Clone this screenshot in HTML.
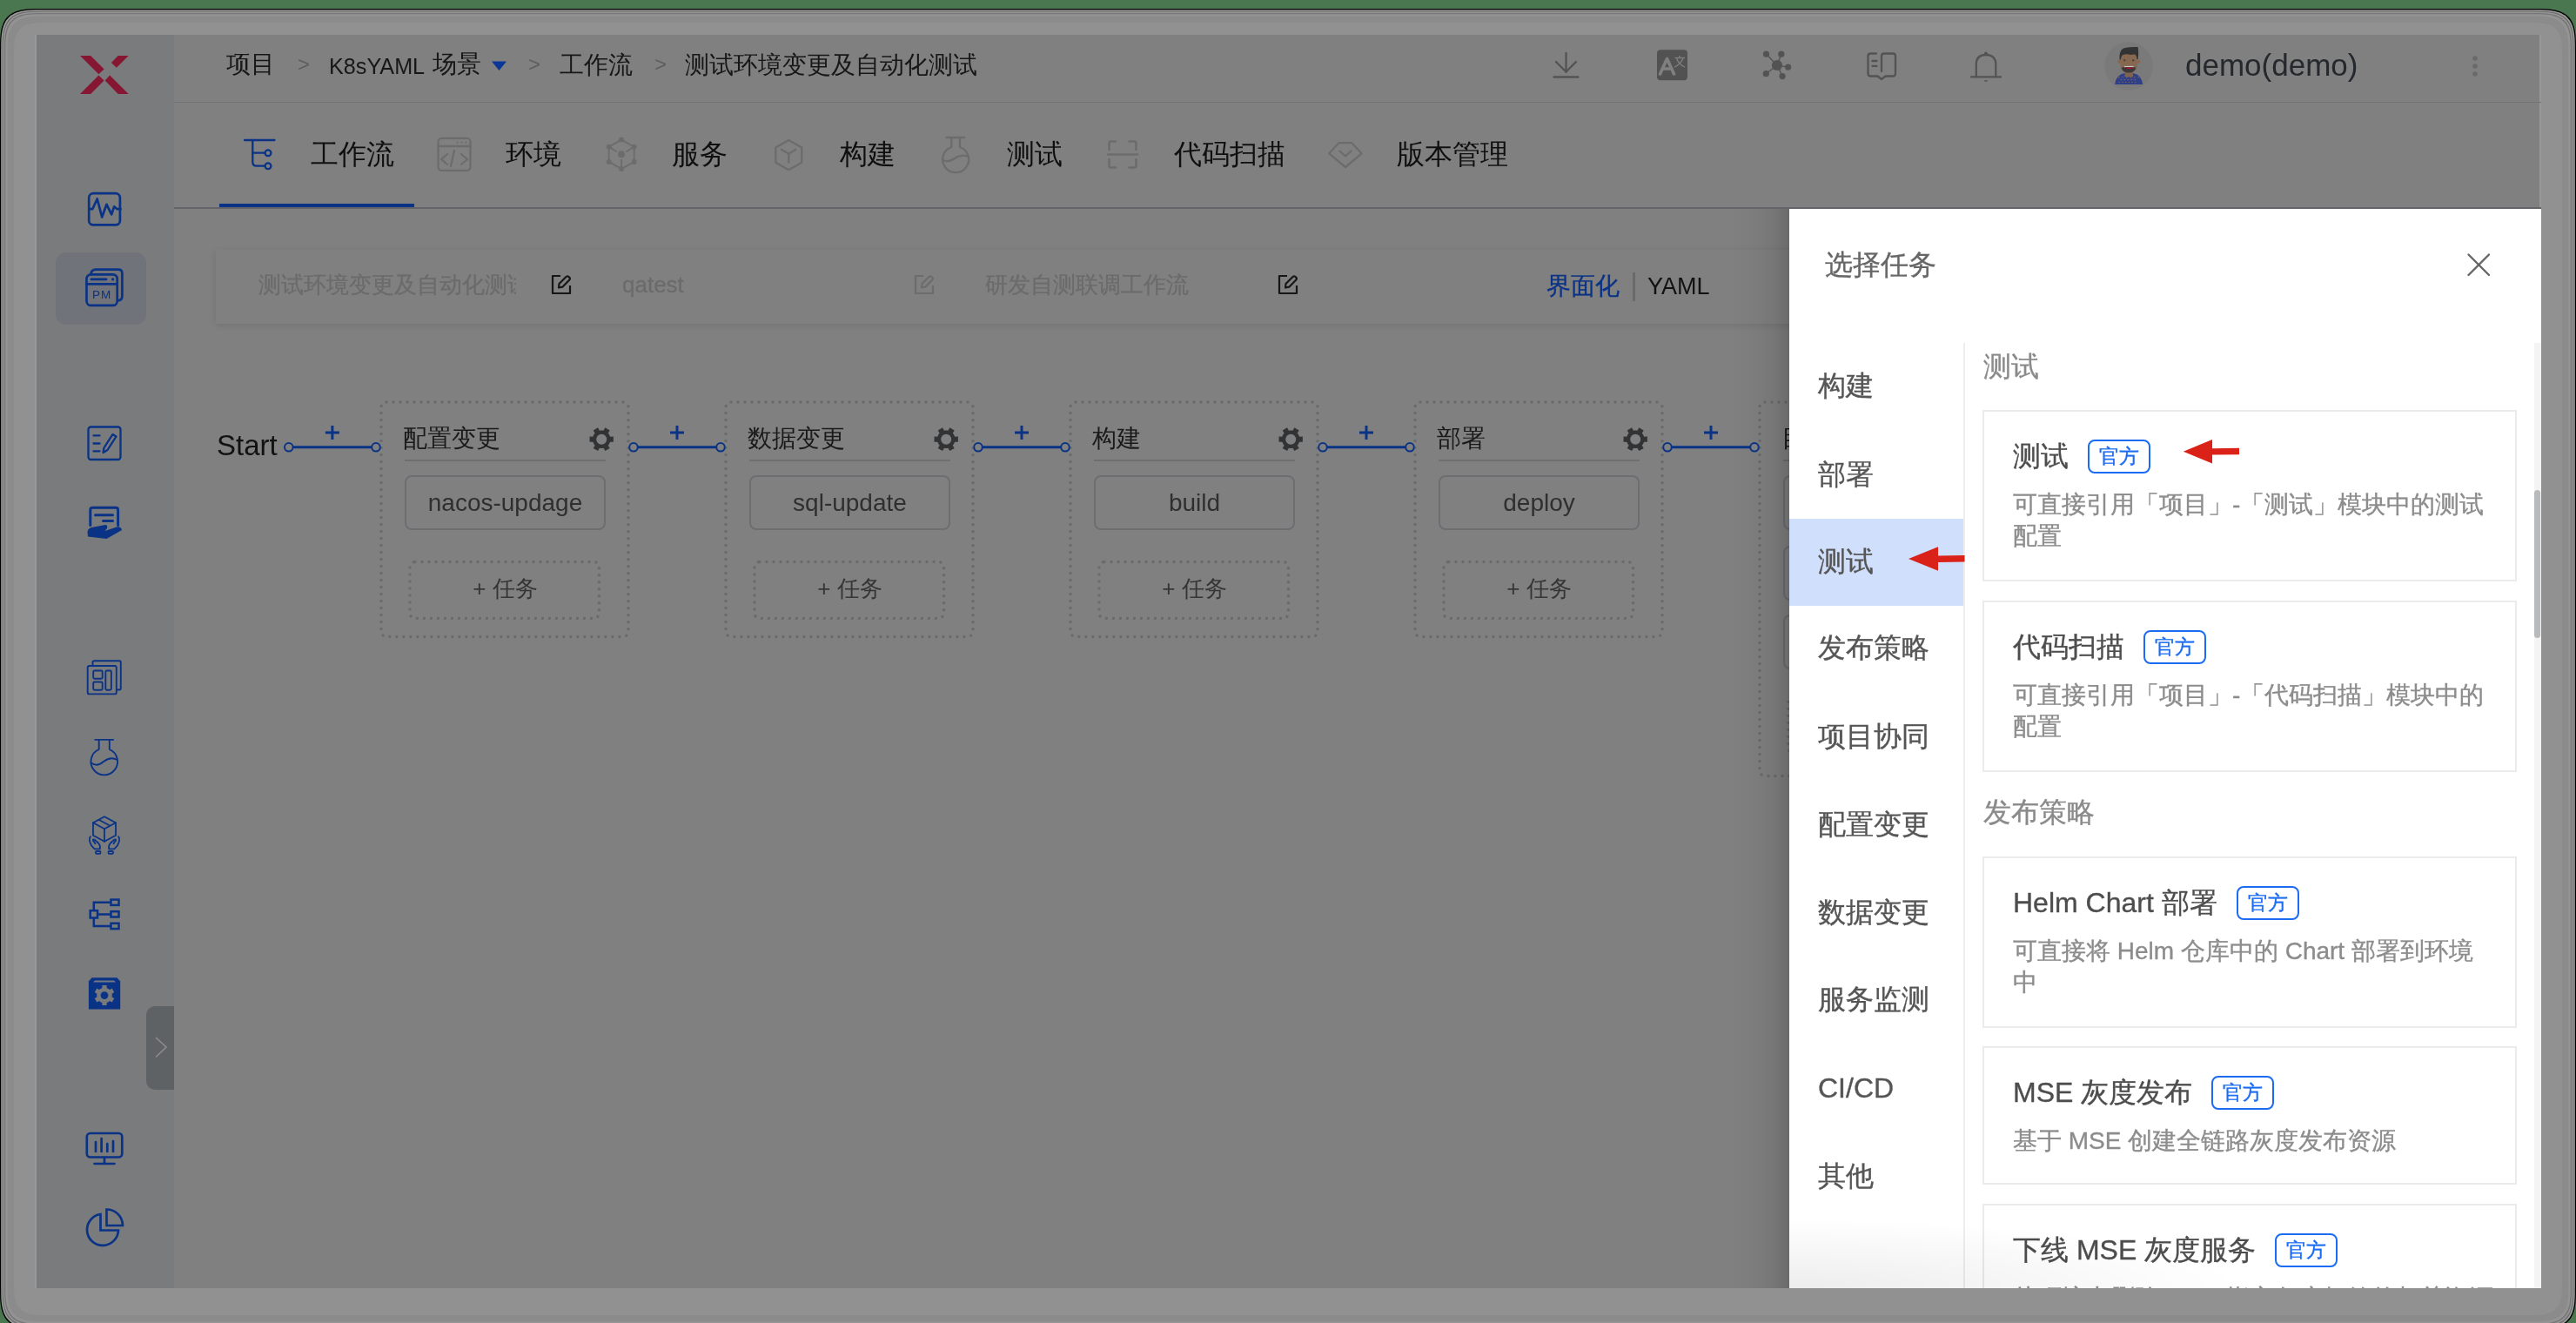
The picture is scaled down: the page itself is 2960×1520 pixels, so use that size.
<!DOCTYPE html><html><head><meta charset="utf-8"><style>
html,body{margin:0;padding:0;width:2960px;height:1520px;overflow:hidden;background:#4a7650;}
*{box-sizing:border-box;}
.t{position:absolute;white-space:nowrap;font-family:"Liberation Sans",sans-serif;will-change:transform;}
.abs{position:absolute;}
.sk{-webkit-text-stroke:0.35px currentColor;}
.sk2{-webkit-text-stroke:0.3px currentColor;}
svg{position:absolute;left:0;top:0;overflow:visible;}
</style></head><body>
<svg width="2960" height="1520"><path d="M0.00,60.00 L0.06,49.48 L0.24,44.38 L0.55,40.35 L0.98,36.90 L1.53,33.86 L2.21,31.12 L3.02,28.63 L3.95,26.35 L5.00,24.26 L6.20,22.35 L7.52,20.59 L8.98,18.98 L10.59,17.52 L12.35,16.20 L14.26,15.00 L16.35,13.95 L18.63,13.02 L21.12,12.21 L23.86,11.53 L26.90,10.98 L30.35,10.55 L34.38,10.24 L39.48,10.06 L50.00,10.00 L2910.00,10.00 L2920.52,10.06 L2925.62,10.24 L2929.65,10.55 L2933.10,10.98 L2936.14,11.53 L2938.88,12.21 L2941.37,13.02 L2943.65,13.95 L2945.74,15.00 L2947.65,16.20 L2949.41,17.52 L2951.02,18.98 L2952.48,20.59 L2953.80,22.35 L2955.00,24.26 L2956.05,26.35 L2956.98,28.63 L2957.79,31.12 L2958.47,33.86 L2959.02,36.90 L2959.45,40.35 L2959.76,44.38 L2959.94,49.48 L2960.00,60.00 L2960.00,1477.00 L2959.94,1487.52 L2959.76,1492.62 L2959.45,1496.65 L2959.02,1500.10 L2958.47,1503.14 L2957.79,1505.88 L2956.98,1508.37 L2956.05,1510.65 L2955.00,1512.74 L2953.80,1514.65 L2952.48,1516.41 L2951.02,1518.02 L2949.41,1519.48 L2947.65,1520.80 L2945.74,1522.00 L2943.65,1523.05 L2941.37,1523.98 L2938.88,1524.79 L2936.14,1525.47 L2933.10,1526.02 L2929.65,1526.45 L2925.62,1526.76 L2920.52,1526.94 L2910.00,1527.00 L50.00,1527.00 L39.48,1526.94 L34.38,1526.76 L30.35,1526.45 L26.90,1526.02 L23.86,1525.47 L21.12,1524.79 L18.63,1523.98 L16.35,1523.05 L14.26,1522.00 L12.35,1520.80 L10.59,1519.48 L8.98,1518.02 L7.52,1516.41 L6.20,1514.65 L5.00,1512.74 L3.95,1510.65 L3.02,1508.37 L2.21,1505.88 L1.53,1503.14 L0.98,1500.10 L0.55,1496.65 L0.24,1492.62 L0.06,1487.52 L0.00,1477.00 Z" fill="#000"/><path d="M1.20,60.48 L1.26,50.11 L1.44,45.09 L1.74,41.11 L2.17,37.72 L2.71,34.72 L3.38,32.02 L4.17,29.56 L5.09,27.32 L6.13,25.26 L7.31,23.37 L8.61,21.64 L10.05,20.05 L11.64,18.61 L13.37,17.31 L15.26,16.13 L17.32,15.09 L19.56,14.17 L22.02,13.38 L24.72,12.71 L27.72,12.17 L31.11,11.74 L35.09,11.44 L40.11,11.26 L50.48,11.20 L2909.52,11.20 L2919.89,11.26 L2924.91,11.44 L2928.89,11.74 L2932.28,12.17 L2935.28,12.71 L2937.98,13.38 L2940.44,14.17 L2942.68,15.09 L2944.74,16.13 L2946.63,17.31 L2948.36,18.61 L2949.95,20.05 L2951.39,21.64 L2952.69,23.37 L2953.87,25.26 L2954.91,27.32 L2955.83,29.56 L2956.62,32.02 L2957.29,34.72 L2957.83,37.72 L2958.26,41.11 L2958.56,45.09 L2958.74,50.11 L2958.80,60.48 L2958.80,1476.52 L2958.74,1486.89 L2958.56,1491.91 L2958.26,1495.89 L2957.83,1499.28 L2957.29,1502.28 L2956.62,1504.98 L2955.83,1507.44 L2954.91,1509.68 L2953.87,1511.74 L2952.69,1513.63 L2951.39,1515.36 L2949.95,1516.95 L2948.36,1518.39 L2946.63,1519.69 L2944.74,1520.87 L2942.68,1521.91 L2940.44,1522.83 L2937.98,1523.62 L2935.28,1524.29 L2932.28,1524.83 L2928.89,1525.26 L2924.91,1525.56 L2919.89,1525.74 L2909.52,1525.80 L50.48,1525.80 L40.11,1525.74 L35.09,1525.56 L31.11,1525.26 L27.72,1524.83 L24.72,1524.29 L22.02,1523.62 L19.56,1522.83 L17.32,1521.91 L15.26,1520.87 L13.37,1519.69 L11.64,1518.39 L10.05,1516.95 L8.61,1515.36 L7.31,1513.63 L6.13,1511.74 L5.09,1509.68 L4.17,1507.44 L3.38,1504.98 L2.71,1502.28 L2.17,1499.28 L1.74,1495.89 L1.44,1491.91 L1.26,1486.89 L1.20,1476.52 Z" fill="#9c9c9c"/><path d="M2.60,61.04 L2.66,50.84 L2.84,45.91 L3.13,42.00 L3.55,38.66 L4.09,35.72 L4.74,33.06 L5.52,30.65 L6.42,28.44 L7.45,26.42 L8.60,24.56 L9.89,22.86 L11.30,21.30 L12.86,19.89 L14.56,18.60 L16.42,17.45 L18.44,16.42 L20.65,15.52 L23.06,14.74 L25.72,14.09 L28.66,13.55 L32.00,13.13 L35.91,12.84 L40.84,12.66 L51.04,12.60 L2908.96,12.60 L2919.16,12.66 L2924.09,12.84 L2928.00,13.13 L2931.34,13.55 L2934.28,14.09 L2936.94,14.74 L2939.35,15.52 L2941.56,16.42 L2943.58,17.45 L2945.44,18.60 L2947.14,19.89 L2948.70,21.30 L2950.11,22.86 L2951.40,24.56 L2952.55,26.42 L2953.58,28.44 L2954.48,30.65 L2955.26,33.06 L2955.91,35.72 L2956.45,38.66 L2956.87,42.00 L2957.16,45.91 L2957.34,50.84 L2957.40,61.04 L2957.40,1475.96 L2957.34,1486.16 L2957.16,1491.09 L2956.87,1495.00 L2956.45,1498.34 L2955.91,1501.28 L2955.26,1503.94 L2954.48,1506.35 L2953.58,1508.56 L2952.55,1510.58 L2951.40,1512.44 L2950.11,1514.14 L2948.70,1515.70 L2947.14,1517.11 L2945.44,1518.40 L2943.58,1519.55 L2941.56,1520.58 L2939.35,1521.48 L2936.94,1522.26 L2934.28,1522.91 L2931.34,1523.45 L2928.00,1523.87 L2924.09,1524.16 L2919.16,1524.34 L2908.96,1524.40 L51.04,1524.40 L40.84,1524.34 L35.91,1524.16 L32.00,1523.87 L28.66,1523.45 L25.72,1522.91 L23.06,1522.26 L20.65,1521.48 L18.44,1520.58 L16.42,1519.55 L14.56,1518.40 L12.86,1517.11 L11.30,1515.70 L9.89,1514.14 L8.60,1512.44 L7.45,1510.58 L6.42,1508.56 L5.52,1506.35 L4.74,1503.94 L4.09,1501.28 L3.55,1498.34 L3.13,1495.00 L2.84,1491.09 L2.66,1486.16 L2.60,1475.96 Z" fill="#6b6b6b"/><path d="M3.60,61.44 L3.66,51.37 L3.83,46.50 L4.13,42.64 L4.54,39.34 L5.07,36.43 L5.72,33.81 L6.48,31.43 L7.37,29.25 L8.39,27.25 L9.53,25.41 L10.80,23.73 L12.20,22.20 L13.73,20.80 L15.41,19.53 L17.25,18.39 L19.25,17.37 L21.43,16.48 L23.81,15.72 L26.43,15.07 L29.34,14.54 L32.64,14.13 L36.50,13.83 L41.37,13.66 L51.44,13.60 L2908.56,13.60 L2918.63,13.66 L2923.50,13.83 L2927.36,14.13 L2930.66,14.54 L2933.57,15.07 L2936.19,15.72 L2938.57,16.48 L2940.75,17.37 L2942.75,18.39 L2944.59,19.53 L2946.27,20.80 L2947.80,22.20 L2949.20,23.73 L2950.47,25.41 L2951.61,27.25 L2952.63,29.25 L2953.52,31.43 L2954.28,33.81 L2954.93,36.43 L2955.46,39.34 L2955.87,42.64 L2956.17,46.50 L2956.34,51.37 L2956.40,61.44 L2956.40,1475.56 L2956.34,1485.63 L2956.17,1490.50 L2955.87,1494.36 L2955.46,1497.66 L2954.93,1500.57 L2954.28,1503.19 L2953.52,1505.57 L2952.63,1507.75 L2951.61,1509.75 L2950.47,1511.59 L2949.20,1513.27 L2947.80,1514.80 L2946.27,1516.20 L2944.59,1517.47 L2942.75,1518.61 L2940.75,1519.63 L2938.57,1520.52 L2936.19,1521.28 L2933.57,1521.93 L2930.66,1522.46 L2927.36,1522.87 L2923.50,1523.17 L2918.63,1523.34 L2908.56,1523.40 L51.44,1523.40 L41.37,1523.34 L36.50,1523.17 L32.64,1522.87 L29.34,1522.46 L26.43,1521.93 L23.81,1521.28 L21.43,1520.52 L19.25,1519.63 L17.25,1518.61 L15.41,1517.47 L13.73,1516.20 L12.20,1514.80 L10.80,1513.27 L9.53,1511.59 L8.39,1509.75 L7.37,1507.75 L6.48,1505.57 L5.72,1503.19 L5.07,1500.57 L4.54,1497.66 L4.13,1494.36 L3.83,1490.50 L3.66,1485.63 L3.60,1475.56 Z" fill="#959595"/><path d="M5.00,62.00 L5.06,52.11 L5.23,47.32 L5.52,43.53 L5.92,40.29 L6.44,37.43 L7.08,34.85 L7.83,32.51 L8.71,30.37 L9.70,28.41 L10.82,26.61 L12.07,24.95 L13.44,23.44 L14.95,22.07 L16.61,20.82 L18.41,19.70 L20.37,18.71 L22.51,17.83 L24.85,17.08 L27.43,16.44 L30.29,15.92 L33.53,15.52 L37.32,15.23 L42.11,15.06 L52.00,15.00 L2908.00,15.00 L2917.89,15.06 L2922.68,15.23 L2926.47,15.52 L2929.71,15.92 L2932.57,16.44 L2935.15,17.08 L2937.49,17.83 L2939.63,18.71 L2941.59,19.70 L2943.39,20.82 L2945.05,22.07 L2946.56,23.44 L2947.93,24.95 L2949.18,26.61 L2950.30,28.41 L2951.29,30.37 L2952.17,32.51 L2952.92,34.85 L2953.56,37.43 L2954.08,40.29 L2954.48,43.53 L2954.77,47.32 L2954.94,52.11 L2955.00,62.00 L2955.00,1475.00 L2954.94,1484.89 L2954.77,1489.68 L2954.48,1493.47 L2954.08,1496.71 L2953.56,1499.57 L2952.92,1502.15 L2952.17,1504.49 L2951.29,1506.63 L2950.30,1508.59 L2949.18,1510.39 L2947.93,1512.05 L2946.56,1513.56 L2945.05,1514.93 L2943.39,1516.18 L2941.59,1517.30 L2939.63,1518.29 L2937.49,1519.17 L2935.15,1519.92 L2932.57,1520.56 L2929.71,1521.08 L2926.47,1521.48 L2922.68,1521.77 L2917.89,1521.94 L2908.00,1522.00 L52.00,1522.00 L42.11,1521.94 L37.32,1521.77 L33.53,1521.48 L30.29,1521.08 L27.43,1520.56 L24.85,1519.92 L22.51,1519.17 L20.37,1518.29 L18.41,1517.30 L16.61,1516.18 L14.95,1514.93 L13.44,1513.56 L12.07,1512.05 L10.82,1510.39 L9.70,1508.59 L8.71,1506.63 L7.83,1504.49 L7.08,1502.15 L6.44,1499.57 L5.92,1496.71 L5.52,1493.47 L5.23,1489.68 L5.06,1484.89 L5.00,1475.00 Z" fill="#767676"/><path d="M6.20,62.48 L6.26,52.74 L6.43,48.02 L6.71,44.29 L7.11,41.10 L7.62,38.28 L8.25,35.75 L8.99,33.44 L9.85,31.34 L10.83,29.40 L11.93,27.63 L13.16,26.00 L14.51,24.51 L16.00,23.16 L17.63,21.93 L19.40,20.83 L21.34,19.85 L23.44,18.99 L25.75,18.25 L28.28,17.62 L31.10,17.11 L34.29,16.71 L38.02,16.43 L42.74,16.26 L52.48,16.20 L2907.52,16.20 L2917.26,16.26 L2921.98,16.43 L2925.71,16.71 L2928.90,17.11 L2931.72,17.62 L2934.25,18.25 L2936.56,18.99 L2938.66,19.85 L2940.60,20.83 L2942.37,21.93 L2944.00,23.16 L2945.49,24.51 L2946.84,26.00 L2948.07,27.63 L2949.17,29.40 L2950.15,31.34 L2951.01,33.44 L2951.75,35.75 L2952.38,38.28 L2952.89,41.10 L2953.29,44.29 L2953.57,48.02 L2953.74,52.74 L2953.80,62.48 L2953.80,1474.52 L2953.74,1484.26 L2953.57,1488.98 L2953.29,1492.71 L2952.89,1495.90 L2952.38,1498.72 L2951.75,1501.25 L2951.01,1503.56 L2950.15,1505.66 L2949.17,1507.60 L2948.07,1509.37 L2946.84,1511.00 L2945.49,1512.49 L2944.00,1513.84 L2942.37,1515.07 L2940.60,1516.17 L2938.66,1517.15 L2936.56,1518.01 L2934.25,1518.75 L2931.72,1519.38 L2928.90,1519.89 L2925.71,1520.29 L2921.98,1520.57 L2917.26,1520.74 L2907.52,1520.80 L52.48,1520.80 L42.74,1520.74 L38.02,1520.57 L34.29,1520.29 L31.10,1519.89 L28.28,1519.38 L25.75,1518.75 L23.44,1518.01 L21.34,1517.15 L19.40,1516.17 L17.63,1515.07 L16.00,1513.84 L14.51,1512.49 L13.16,1511.00 L11.93,1509.37 L10.83,1507.60 L9.85,1505.66 L8.99,1503.56 L8.25,1501.25 L7.62,1498.72 L7.11,1495.90 L6.71,1492.71 L6.43,1488.98 L6.26,1484.26 L6.20,1474.52 Z" fill="#949494"/><path d="M8.50,63.40 L8.55,53.95 L8.72,49.37 L9.00,45.75 L9.38,42.66 L9.88,39.93 L10.49,37.47 L11.21,35.23 L12.04,33.18 L12.99,31.31 L14.06,29.59 L15.25,28.01 L16.57,26.57 L18.01,25.25 L19.59,24.06 L21.31,22.99 L23.18,22.04 L25.23,21.21 L27.47,20.49 L29.93,19.88 L32.66,19.38 L35.75,19.00 L39.37,18.72 L43.95,18.55 L53.40,18.50 L2906.60,18.50 L2916.05,18.55 L2920.63,18.72 L2924.25,19.00 L2927.34,19.38 L2930.07,19.88 L2932.53,20.49 L2934.77,21.21 L2936.82,22.04 L2938.69,22.99 L2940.41,24.06 L2941.99,25.25 L2943.43,26.57 L2944.75,28.01 L2945.94,29.59 L2947.01,31.31 L2947.96,33.18 L2948.79,35.23 L2949.51,37.47 L2950.12,39.93 L2950.62,42.66 L2951.00,45.75 L2951.28,49.37 L2951.45,53.95 L2951.50,63.40 L2951.50,1473.60 L2951.45,1483.05 L2951.28,1487.63 L2951.00,1491.25 L2950.62,1494.34 L2950.12,1497.07 L2949.51,1499.53 L2948.79,1501.77 L2947.96,1503.82 L2947.01,1505.69 L2945.94,1507.41 L2944.75,1508.99 L2943.43,1510.43 L2941.99,1511.75 L2940.41,1512.94 L2938.69,1514.01 L2936.82,1514.96 L2934.77,1515.79 L2932.53,1516.51 L2930.07,1517.12 L2927.34,1517.62 L2924.25,1518.00 L2920.63,1518.28 L2916.05,1518.45 L2906.60,1518.50 L53.40,1518.50 L43.95,1518.45 L39.37,1518.28 L35.75,1518.00 L32.66,1517.62 L29.93,1517.12 L27.47,1516.51 L25.23,1515.79 L23.18,1514.96 L21.31,1514.01 L19.59,1512.94 L18.01,1511.75 L16.57,1510.43 L15.25,1508.99 L14.06,1507.41 L12.99,1505.69 L12.04,1503.82 L11.21,1501.77 L10.49,1499.53 L9.88,1497.07 L9.38,1494.34 L9.00,1491.25 L8.72,1487.63 L8.55,1483.05 L8.50,1473.60 Z" fill="#8b8b8b"/><path d="M16.00,66.40 L16.05,57.90 L16.20,53.78 L16.45,50.52 L16.79,47.74 L17.24,45.28 L17.79,43.07 L18.44,41.05 L19.19,39.21 L20.04,37.53 L21.01,35.98 L22.08,34.56 L23.26,33.26 L24.56,32.08 L25.98,31.01 L27.53,30.04 L29.21,29.19 L31.05,28.44 L33.07,27.79 L35.28,27.24 L37.74,26.79 L40.52,26.45 L43.78,26.20 L47.90,26.05 L56.40,26.00 L2903.60,26.00 L2912.10,26.05 L2916.22,26.20 L2919.48,26.45 L2922.26,26.79 L2924.72,27.24 L2926.93,27.79 L2928.95,28.44 L2930.79,29.19 L2932.47,30.04 L2934.02,31.01 L2935.44,32.08 L2936.74,33.26 L2937.92,34.56 L2938.99,35.98 L2939.96,37.53 L2940.81,39.21 L2941.56,41.05 L2942.21,43.07 L2942.76,45.28 L2943.21,47.74 L2943.55,50.52 L2943.80,53.78 L2943.95,57.90 L2944.00,66.40 L2944.00,1470.60 L2943.95,1479.10 L2943.80,1483.22 L2943.55,1486.48 L2943.21,1489.26 L2942.76,1491.72 L2942.21,1493.93 L2941.56,1495.95 L2940.81,1497.79 L2939.96,1499.47 L2938.99,1501.02 L2937.92,1502.44 L2936.74,1503.74 L2935.44,1504.92 L2934.02,1505.99 L2932.47,1506.96 L2930.79,1507.81 L2928.95,1508.56 L2926.93,1509.21 L2924.72,1509.76 L2922.26,1510.21 L2919.48,1510.55 L2916.22,1510.80 L2912.10,1510.95 L2903.60,1511.00 L56.40,1511.00 L47.90,1510.95 L43.78,1510.80 L40.52,1510.55 L37.74,1510.21 L35.28,1509.76 L33.07,1509.21 L31.05,1508.56 L29.21,1507.81 L27.53,1506.96 L25.98,1505.99 L24.56,1504.92 L23.26,1503.74 L22.08,1502.44 L21.01,1501.02 L20.04,1499.47 L19.19,1497.79 L18.44,1495.95 L17.79,1493.93 L17.24,1491.72 L16.79,1489.26 L16.45,1486.48 L16.20,1483.22 L16.05,1479.10 L16.00,1470.60 Z" fill="#919191"/></svg>
<div class="abs" style="left:42px;top:40px;width:2878px;height:1440px;background:#808080;overflow:hidden;"></div>
<div class="abs" style="left:40px;top:40px;width:2px;height:1440px;background:#999;"></div>
<div class="abs" style="left:2918px;top:40px;width:2px;height:200px;background:#979797;"></div>
<div class="abs" style="left:42px;top:40px;width:158px;height:1440px;background:#7a7b7d;"></div>
<div class="abs" style="left:200px;top:117px;width:2720px;height:1px;background:#727376;"></div>
<div class="abs" style="left:200px;top:238px;width:2720px;height:2px;background:#636467;"></div>
<div class="abs" style="left:252px;top:234px;width:224px;height:4px;background:#0a3386;"></div>
<div class="abs" style="left:64px;top:290px;width:104px;height:83px;border-radius:12px;background:#70737a;"></div>
<div class="abs" style="left:168px;top:1156px;width:32px;height:96px;border-radius:10px 0 0 10px;background:#5f6264;"></div>
<div class="t " style="left:260px;top:60px;font-size:28px;line-height:28px;color:#171717;">项目</div>
<div class="t " style="left:342px;top:62px;font-size:24px;line-height:24px;color:#5e5e5e;">&gt;</div>
<div class="t " style="left:378px;top:64px;font-size:25.2px;line-height:25.2px;color:#171717;">K8sYAML</div>
<div class="t " style="left:497px;top:60px;font-size:28px;line-height:28px;color:#171717;">场景</div>
<div class="t " style="left:607px;top:62px;font-size:24px;line-height:24px;color:#5e5e5e;">&gt;</div>
<div class="t " style="left:643px;top:60.5px;font-size:28px;line-height:28px;color:#171717;">工作流</div>
<div class="t " style="left:752px;top:62px;font-size:24px;line-height:24px;color:#5e5e5e;">&gt;</div>
<div class="t " style="left:787px;top:60.5px;font-size:28px;line-height:28px;color:#171717;">测试环境变更及自动化测试</div>
<div class="t " style="left:2511px;top:57px;font-size:35px;line-height:35px;color:#25282c;">demo(demo)</div>
<div class="t " style="left:357px;top:161px;font-size:32px;line-height:32px;color:#0f0f0f;">工作流</div>
<div class="t " style="left:581px;top:161px;font-size:32px;line-height:32px;color:#0f0f0f;">环境</div>
<div class="t " style="left:772px;top:161px;font-size:32px;line-height:32px;color:#0f0f0f;">服务</div>
<div class="t " style="left:965px;top:161px;font-size:32px;line-height:32px;color:#0f0f0f;">构建</div>
<div class="t " style="left:1157px;top:161px;font-size:32px;line-height:32px;color:#0f0f0f;">测试</div>
<div class="t " style="left:1349px;top:161px;font-size:32px;line-height:32px;color:#0f0f0f;">代码扫描</div>
<div class="t " style="left:1605px;top:161px;font-size:32px;line-height:32px;color:#0f0f0f;">版本管理</div>
<div class="abs" style="left:248px;top:287px;width:1900px;height:85px;background:#808080;box-shadow:0 2px 8px rgba(0,0,0,0.10);"></div>
<div class="t sk2" style="left:297px;top:314px;width:296px;overflow:hidden;font-size:26px;line-height:26px;color:#6b6b6b">测试环境变更及自动化测试</div>
<div class="t sk2" style="left:715px;top:314px;font-size:26px;line-height:26px;color:#6b6b6b;">qatest</div>
<div class="t sk2" style="left:1132px;top:314px;font-size:26px;line-height:26px;color:#6b6b6b;">研发自测联调工作流</div>
<div class="t sk2" style="left:1777px;top:315px;font-size:28px;line-height:28px;color:#0a3386;">界面化</div>
<div class="abs" style="left:1876px;top:313px;width:3px;height:33px;background:#696a6c;"></div>
<div class="t " style="left:1893px;top:316px;font-size:27px;line-height:27px;color:#121212;">YAML</div>
<div class="t " style="left:249px;top:495px;font-size:33px;line-height:33px;color:#121212;">Start</div>
<div class="t " style="left:463.0px;top:489.5px;font-size:28px;line-height:28px;color:#1a1a1a;">配置变更</div>
<div class="abs" style="left:464.5px;top:528px;width:231px;height:2px;background:#6f6f6f;"></div>
<div class="abs" style="left:464.5px;top:546px;width:231px;height:63px;border:2px solid #6c6e72;border-radius:8px;"></div>
<div class="t" style="left:464.5px;top:561px;width:231px;text-align:center;font-size:28px;line-height:34px;color:#2f2f2f">nacos-updage</div>
<div class="t" style="left:469.5px;top:662px;width:221px;text-align:center;font-size:26px;line-height:28px;color:#353535">+ 任务</div>
<div class="t " style="left:859.0px;top:489.5px;font-size:28px;line-height:28px;color:#1a1a1a;">数据变更</div>
<div class="abs" style="left:860.5px;top:528px;width:231px;height:2px;background:#6f6f6f;"></div>
<div class="abs" style="left:860.5px;top:546px;width:231px;height:63px;border:2px solid #6c6e72;border-radius:8px;"></div>
<div class="t" style="left:860.5px;top:561px;width:231px;text-align:center;font-size:28px;line-height:34px;color:#2f2f2f">sql-update</div>
<div class="t" style="left:865.5px;top:662px;width:221px;text-align:center;font-size:26px;line-height:28px;color:#353535">+ 任务</div>
<div class="t " style="left:1255.0px;top:489.5px;font-size:28px;line-height:28px;color:#1a1a1a;">构建</div>
<div class="abs" style="left:1256.5px;top:528px;width:231px;height:2px;background:#6f6f6f;"></div>
<div class="abs" style="left:1256.5px;top:546px;width:231px;height:63px;border:2px solid #6c6e72;border-radius:8px;"></div>
<div class="t" style="left:1256.5px;top:561px;width:231px;text-align:center;font-size:28px;line-height:34px;color:#2f2f2f">build</div>
<div class="t" style="left:1261.5px;top:662px;width:221px;text-align:center;font-size:26px;line-height:28px;color:#353535">+ 任务</div>
<div class="t " style="left:1651.0px;top:489.5px;font-size:28px;line-height:28px;color:#1a1a1a;">部署</div>
<div class="abs" style="left:1652.5px;top:528px;width:231px;height:2px;background:#6f6f6f;"></div>
<div class="abs" style="left:1652.5px;top:546px;width:231px;height:63px;border:2px solid #6c6e72;border-radius:8px;"></div>
<div class="t" style="left:1652.5px;top:561px;width:231px;text-align:center;font-size:28px;line-height:34px;color:#2f2f2f">deploy</div>
<div class="t" style="left:1657.5px;top:662px;width:221px;text-align:center;font-size:26px;line-height:28px;color:#353535">+ 任务</div>
<div class="t " style="left:2047.0px;top:489.5px;font-size:28px;line-height:28px;color:#1a1a1a;">目录</div>
<div class="abs" style="left:2048.5px;top:528px;width:231px;height:2px;background:#6f6f6f;"></div>
<div class="abs" style="left:2048.5px;top:546px;width:231px;height:63px;border:2px solid #6c6e72;border-radius:8px;"></div>
<div class="abs" style="left:2048.5px;top:627px;width:231px;height:63px;border:2px solid #6c6e72;border-radius:8px;"></div>
<div class="abs" style="left:2048.5px;top:706px;width:231px;height:63px;border:2px solid #6c6e72;border-radius:8px;"></div>
<svg width="2960" height="1520"><g fill="none" stroke="#6a6b6d" stroke-width="3.6" stroke-dasharray="0 8" stroke-linecap="round"><rect x="438.0" y="462" width="284" height="269.5" rx="6"/><rect x="471.0" y="645.5" width="217.5" height="65" rx="6"/><rect x="834.0" y="462" width="284" height="269.5" rx="6"/><rect x="867.0" y="645.5" width="217.5" height="65" rx="6"/><rect x="1230.0" y="462" width="284" height="269.5" rx="6"/><rect x="1263.0" y="645.5" width="217.5" height="65" rx="6"/><rect x="1626.0" y="462" width="284" height="269.5" rx="6"/><rect x="1659.0" y="645.5" width="217.5" height="65" rx="6"/><rect x="2022.0" y="462" width="284" height="429.5" rx="6"/><rect x="2055.0" y="800" width="217.5" height="65" rx="6"/></g></svg>
<div class="abs" style="left:1990px;top:240px;width:66px;height:1240px;background:linear-gradient(to right,rgba(0,0,0,0) 0%,rgba(0,0,0,0.03) 45%,rgba(0,0,0,0.08) 75%,rgba(0,0,0,0.17) 100%);"></div>
<div class="abs" style="left:2056px;top:240px;width:864px;height:1240px;background:#fff;"></div>
<div class="t sk" style="left:2097px;top:288px;font-size:32px;line-height:32px;color:#666666;">选择任务</div>
<div class="abs" style="left:2056px;top:596px;width:200px;height:100px;background:#d0dffc;"></div>
<div class="abs" style="left:2256px;top:394px;width:2px;height:1086px;background:#eeeeee;"></div>
<div class="t sk" style="left:2089px;top:427px;font-size:32px;line-height:32px;color:#555555;">构建</div>
<div class="t sk" style="left:2089px;top:528.5px;font-size:32px;line-height:32px;color:#555555;">部署</div>
<div class="t sk" style="left:2089px;top:628.5px;font-size:32px;line-height:32px;color:#555555;">测试</div>
<div class="t sk" style="left:2089px;top:728px;font-size:32px;line-height:32px;color:#555555;">发布策略</div>
<div class="t sk" style="left:2089px;top:829.5px;font-size:32px;line-height:32px;color:#555555;">项目协同</div>
<div class="t sk" style="left:2089px;top:931px;font-size:32px;line-height:32px;color:#555555;">配置变更</div>
<div class="t sk" style="left:2089px;top:1032px;font-size:32px;line-height:32px;color:#555555;">数据变更</div>
<div class="t sk" style="left:2089px;top:1132px;font-size:32px;line-height:32px;color:#555555;">服务监测</div>
<div class="t sk" style="left:2089px;top:1233.5px;font-size:32px;line-height:32px;color:#555555;">CI/CD</div>
<div class="t sk" style="left:2089px;top:1334.5px;font-size:32px;line-height:32px;color:#555555;">其他</div>
<div class="abs" style="left:2912px;top:394px;width:8px;height:1086px;background:#f4f4f4;"></div>
<div class="abs" style="left:2912px;top:563px;width:7px;height:170px;border-radius:4px;background:#b9babb;"></div>
<div class="t sk" style="left:2279px;top:405px;font-size:32px;line-height:32px;color:#8a8a8a;">测试</div>
<div class="t sk" style="left:2279px;top:917px;font-size:32px;line-height:32px;color:#8a8a8a;">发布策略</div>
<div class="abs" style="left:2056px;top:240px;width:864px;height:1240px;overflow:hidden;">
<div class="abs" style="left:222px;top:231px;width:614px;height:197px;border:2px solid #e9ebed;"></div>
<div class="t sk" style="left:257px;top:264px;font-size:32px;line-height:32px;color:#4d4d4d;display:flex;align-items:center;">测试<span style="display:inline-block;margin-left:22px;width:72px;height:39px;border:2px solid #1b6cf2;border-radius:8px;color:#1b6cf2;font-size:23px;line-height:35px;text-align:center;font-weight:500;position:relative;top:1px;">官方</span></div>
<div class="t sk" style="left:257px;top:322px;font-size:28px;line-height:36px;color:#8c8c8c">可直接引用「项目」-「测试」模块中的测试<br>配置</div>
<div class="abs" style="left:222px;top:449.5px;width:614px;height:197px;border:2px solid #e9ebed;"></div>
<div class="t sk" style="left:257px;top:482.5px;font-size:32px;line-height:32px;color:#4d4d4d;display:flex;align-items:center;">代码扫描<span style="display:inline-block;margin-left:22px;width:72px;height:39px;border:2px solid #1b6cf2;border-radius:8px;color:#1b6cf2;font-size:23px;line-height:35px;text-align:center;font-weight:500;position:relative;top:1px;">官方</span></div>
<div class="t sk" style="left:257px;top:540.5px;font-size:28px;line-height:36px;color:#8c8c8c">可直接引用「项目」-「代码扫描」模块中的<br>配置</div>
<div class="abs" style="left:222px;top:744px;width:614px;height:197px;border:2px solid #e9ebed;"></div>
<div class="t sk" style="left:257px;top:777px;font-size:32px;line-height:32px;color:#4d4d4d;display:flex;align-items:center;">Helm Chart 部署<span style="display:inline-block;margin-left:22px;width:72px;height:39px;border:2px solid #1b6cf2;border-radius:8px;color:#1b6cf2;font-size:23px;line-height:35px;text-align:center;font-weight:500;position:relative;top:1px;">官方</span></div>
<div class="t sk" style="left:257px;top:835px;font-size:28px;line-height:36px;color:#8c8c8c">可直接将 Helm 仓库中的 Chart 部署到环境<br>中</div>
<div class="abs" style="left:222px;top:962px;width:614px;height:159px;border:2px solid #e9ebed;"></div>
<div class="t sk" style="left:257px;top:995px;font-size:32px;line-height:32px;color:#4d4d4d;display:flex;align-items:center;">MSE 灰度发布<span style="display:inline-block;margin-left:22px;width:72px;height:39px;border:2px solid #1b6cf2;border-radius:8px;color:#1b6cf2;font-size:23px;line-height:35px;text-align:center;font-weight:500;position:relative;top:1px;">官方</span></div>
<div class="t sk" style="left:257px;top:1053px;font-size:28px;line-height:36px;color:#8c8c8c">基于 MSE 创建全链路灰度发布资源</div>
<div class="abs" style="left:222px;top:1143px;width:614px;height:159px;border:2px solid #e9ebed;"></div>
<div class="t sk" style="left:257px;top:1176px;font-size:32px;line-height:32px;color:#4d4d4d;display:flex;align-items:center;">下线 MSE 灰度服务<span style="display:inline-block;margin-left:22px;width:72px;height:39px;border:2px solid #1b6cf2;border-radius:8px;color:#1b6cf2;font-size:23px;line-height:35px;text-align:center;font-weight:500;position:relative;top:1px;">官方</span></div>
<div class="t sk" style="left:257px;top:1234px;font-size:28px;line-height:36px;color:#8c8c8c">从环境中删除 MSE 指定灰度标签的相关资源</div>
</div>
<div class="abs" style="left:2056px;top:1400px;width:864px;height:80px;background:radial-gradient(ellipse 520px 80px at 0 100%, rgba(0,0,0,0.07), rgba(0,0,0,0));"></div>
<svg width="2960" height="1520" viewBox="0 0 2960 1520"><g fill="#861733"><polygon points="92,64 104.1,64 119.6,79.4 113.4,85.2"/><polygon points="135.7,64 147.7,64 133.9,77.8 127.9,71.9"/><polygon points="92,108 113.4,86.6 119.6,92.6 104.1,108"/><polygon points="120.7,92.6 126.1,86.4 147.7,108 135.7,108"/></g><g stroke="#0a3386" stroke-width="2.7" fill="none" stroke-linecap="round" stroke-linejoin="round"><rect x="102.2" y="222.2" width="35.7" height="36.2" rx="5"/><polyline points="102.5,240.2 106.3,240.2 111.7,228.5 117.2,249.5 122.5,234.8 128.2,246.3 131.1,237.4 134.7,240.2 138.5,240.2"/><rect x="99.5" y="315.3" width="35.2" height="35.6" rx="5"/><path d="M104.5,315 Q105,309.7 110,309.7 L136,309.7 Q140.4,309.7 140.4,314 L140.4,340 Q140.4,345.2 135.5,345.2"/><line x1="99.5" y1="326.3" x2="134.7" y2="326.3"/><line x1="105" y1="320.9" x2="122" y2="320.9"/></g><circle cx="129.6" cy="320.9" r="1.6" fill="#0a3386"/><text x="117" y="342.8" font-family="Liberation Sans" font-size="13.5" fill="#0a3386" text-anchor="middle" letter-spacing="1">PM</text><g stroke="#0a3386" stroke-width="2.3" fill="none" stroke-linecap="round" stroke-linejoin="round"><rect x="101.5" y="490.5" width="37" height="37.5" rx="3"/><line x1="107.5" y1="500.4" x2="114.5" y2="500.4"/><line x1="107.5" y1="509.5" x2="114.5" y2="509.5"/><line x1="107.5" y1="518.3" x2="114.5" y2="518.3"/><path d="M118.5,520 L119.5,514.5 L129.5,499 L133.5,501.5 L123.5,517 Z"/></g><g stroke="#0a3386" stroke-width="3" fill="none" stroke-linecap="round" stroke-linejoin="round"><path d="M103.8,603.5 L103.8,586 Q103.8,583.3 106.5,583.3 L133,583.3 Q135.6,583.3 135.6,586 L135.6,603.5"/><line x1="109.5" y1="591.7" x2="129.5" y2="591.7"/><line x1="118.5" y1="598.5" x2="129.5" y2="598.5"/></g><path d="M100.5,611 Q101,606 108,605.5 L121,603 Q124,603 123,607 L120.5,610 L134,605.5 Q139,604.5 140,609 L122.5,619 L101,616.5 Z" fill="#0a3386"/><g stroke="#0a3386" stroke-width="1.9" fill="none" stroke-linecap="round" stroke-linejoin="round"><path d="M106.5,764.5 L106.5,761 Q106.5,759.2 108.5,759.2 L137,759.2 Q138.8,759.2 138.8,761 L138.8,790.5 Q138.8,792.5 137,792.5 L134,792.5"/><rect x="100.7" y="765" width="33.1" height="32.4" rx="2"/><rect x="107.2" y="770.5" width="10.5" height="9.3" rx="1.5"/><rect x="107.2" y="783.5" width="10.5" height="9.3" rx="1.5"/><rect x="121.3" y="770.5" width="6.6" height="22.3" rx="1.5"/></g><g stroke="#0a3386" stroke-width="1.9" fill="none" stroke-linecap="round" stroke-linejoin="round"><line x1="109.3" y1="849.9" x2="130.1" y2="849.9"/><path d="M113.7,850 L113.7,861 A15.3,15.3 0 1 0 125.8,861 L125.8,850"/><path d="M104.8,876.5 Q111.5,881.5 119,875 Q127,868.5 134.7,873"/></g><g stroke="#0a3386" stroke-width="1.8" fill="none" stroke-linecap="round" stroke-linejoin="round"><path d="M120,938.3 L133,945.3 L133,959.8 L120,966.8 L107,959.8 L107,945.3 Z"/><path d="M107,945.3 L120,952.3 L133,945.3 M120,952.3 L120,966.8 M113.5,941.8 L126.5,948.8"/><path d="M103.9,961.3 Q102.3,962.5 103.3,967.5 Q104.3,971.5 108.6,975.3 L114.9,975.3 Q115.5,971.2 113.2,968.8 L108.6,964.8 Q106.6,963.8 106.9,965.8 L109.5,969.3"/><path d="M136.1,961.3 Q137.7,962.5 136.7,967.5 Q135.7,971.5 131.4,975.3 L125.1,975.3 Q124.5,971.2 126.8,968.8 L131.4,964.8 Q133.4,963.8 133.1,965.8 L130.5,969.3"/><rect x="110" y="978" width="5.5" height="2.8" rx="1"/><rect x="124.5" y="978" width="5.5" height="2.8" rx="1"/></g><g stroke="#0a3386" stroke-width="2.5" fill="none"><rect x="103.7" y="1046.2" width="8.3" height="8.3"/><rect x="127.5" y="1033.6" width="9" height="6.3"/><rect x="127.5" y="1047.2" width="9" height="6.3"/><rect x="127.5" y="1060.8" width="9" height="6.3"/><path d="M107.8,1046 L107.8,1036.8 L127.5,1036.8 M112,1050.4 L127.5,1050.4 M107.8,1054.5 L107.8,1064 L127.5,1064"/></g><path d="M105.5,1123.2 L134.5,1123.2 L138.2,1127.5 L138.2,1159.5 L101.9,1159.5 L101.9,1127.5 Z" fill="#0a3386"/><path d="M109,1126.6 L131,1126.6 L133,1128.4 L107,1128.4 Z" fill="#737985"/><path d="M128.58,1145.54 L131.27,1147.10 L128.67,1151.61 L125.97,1150.06 L125.22,1150.69 L124.40,1151.22 L123.53,1151.66 L122.61,1152.00 L122.60,1155.11 L117.40,1155.11 L117.39,1152.00 L116.47,1151.66 L115.60,1151.22 L114.78,1150.69 L114.03,1150.06 L111.33,1151.61 L108.73,1147.10 L111.42,1145.54 L111.25,1144.58 L111.20,1143.60 L111.25,1142.62 L111.42,1141.66 L108.73,1140.10 L111.33,1135.59 L114.03,1137.14 L114.78,1136.51 L115.60,1135.98 L116.47,1135.54 L117.39,1135.20 L117.40,1132.09 L122.60,1132.09 L122.61,1135.20 L123.53,1135.54 L124.40,1135.98 L125.22,1136.51 L125.97,1137.14 L128.67,1135.59 L131.27,1140.10 L128.58,1141.66 L128.75,1142.62 L128.80,1143.60 L128.75,1144.58 Z" fill="#797a7c"/><circle cx="120" cy="1143.6" r="4.4" fill="#0a3386"/><g stroke="#0a3386" stroke-width="2.7" fill="none" stroke-linecap="round" stroke-linejoin="round"><rect x="99.8" y="1302" width="40.5" height="27.5" rx="4"/><line x1="110" y1="1312" x2="110" y2="1323"/><line x1="116.6" y1="1308" x2="116.6" y2="1323"/><line x1="123.3" y1="1314" x2="123.3" y2="1323"/><line x1="130" y1="1311" x2="130" y2="1323"/><line x1="120" y1="1330" x2="120" y2="1337"/><line x1="108.5" y1="1337" x2="131.5" y2="1337"/></g><g stroke="#0a3386" stroke-width="2.7" fill="none"><path d="M115.5,1395 A18,18 0 1 0 136,1413.5 L115.5,1413.5 Z"/><path d="M122.5,1389.5 A18.5,18.5 0 0 1 141,1408 L122.5,1408 Z"/></g><polyline points="179,1192 191,1203 179,1214.5" fill="none" stroke="#8c8d8e" stroke-width="1.6"/><polygon points="565,70.5 582,70.5 573.5,81" fill="#0a3796"/><g stroke="#535353" stroke-width="2.3" fill="none" stroke-linecap="round" stroke-linejoin="round"><line x1="1799.5" y1="61" x2="1799.5" y2="83"/><polyline points="1788,71 1799.5,82.5 1811,71"/><line x1="1785.5" y1="88.5" x2="1813.5" y2="88.5"/></g><rect x="1904" y="57.3" width="35" height="34.9" rx="4" fill="#525252"/><g stroke="#808080" stroke-width="3.6" fill="none" stroke-linecap="round" stroke-linejoin="round"><polyline points="1907.5,85 1915.5,67.5 1923.5,85"/><line x1="1910.5" y1="79" x2="1920.5" y2="79"/></g><g stroke="#808080" stroke-width="1.3" fill="none"><line x1="1924.5" y1="66.5" x2="1936" y2="66.5"/><line x1="1930" y1="64" x2="1930" y2="66.5"/><path d="M1926.5,67 Q1929,74 1936,77"/><path d="M1934,67 Q1931,74 1924,77"/></g><g stroke="#535353" stroke-width="1.4"><line x1="2042" y1="75" x2="2029.5" y2="62.2"/><line x1="2042" y1="75" x2="2046.8" y2="62.2"/><line x1="2042" y1="75" x2="2054.6" y2="77.1"/><line x1="2042" y1="75" x2="2029.3" y2="84.7"/><line x1="2042" y1="75" x2="2048.1" y2="87.6"/></g><g fill="#535353"><circle cx="2042" cy="75" r="6.1"/><circle cx="2029.5" cy="62.2" r="3.6"/><circle cx="2046.8" cy="62.2" r="3.6"/><circle cx="2054.6" cy="77.1" r="3.6"/><circle cx="2029.3" cy="84.7" r="3.6"/><circle cx="2048.1" cy="87.6" r="3.6"/></g><g stroke="#535353" stroke-width="2.3" fill="none" stroke-linecap="round" stroke-linejoin="round"><path d="M2156,61.5 L2149.5,61.5 Q2146.5,61.5 2146.5,64.5 L2146.5,84.5 Q2146.5,87.5 2149.5,87.5 L2157.5,87.5 L2162,91 L2166.5,87.5 L2175,87.5 Q2178,87.5 2178,84.5 L2178,64.5 Q2178,61.5 2175,61.5 L2165,61.5 Q2162,61.5 2162,64.5 L2162,82"/><line x1="2151.5" y1="70" x2="2156.5" y2="70"/><line x1="2151.5" y1="75.8" x2="2156.5" y2="75.8"/></g><g stroke="#535353" stroke-width="2.3" fill="none" stroke-linecap="round" stroke-linejoin="round"><path d="M2270.8,88 L2270.8,74 Q2270.8,63 2282,63 Q2293.3,63 2293.3,74 L2293.3,88"/><line x1="2265" y1="88.3" x2="2299" y2="88.3"/></g><circle cx="2282" cy="61.5" r="2" fill="#535353"/><path d="M2279.5,92.3 L2284.5,92.3 Q2282,95.5 2279.5,92.3 Z" fill="#535353"/><circle cx="2446" cy="76" r="27.8" fill="#7a7a7a"/><path d="M2430.1,97 Q2431,86 2441.5,84 L2451,84 Q2461,86 2462.1,97 Z" fill="#2f3f88"/><g fill="#8a7050"><rect x="2434.0" y="88.4" width="1.6" height="0.9"/><rect x="2438.5" y="88.4" width="1.6" height="0.9"/><rect x="2443.0" y="88.4" width="1.6" height="0.9"/><rect x="2447.5" y="88.4" width="1.6" height="0.9"/><rect x="2452.0" y="88.4" width="1.6" height="0.9"/><rect x="2456.5" y="88.4" width="1.6" height="0.9"/><rect x="2436.5" y="91.2" width="1.6" height="0.9"/><rect x="2440.5" y="91.2" width="1.6" height="0.9"/><rect x="2444.5" y="91.2" width="1.6" height="0.9"/><rect x="2448.5" y="91.2" width="1.6" height="0.9"/><rect x="2452.5" y="91.2" width="1.6" height="0.9"/><rect x="2434.7" y="93.8" width="1.2" height="1"/><rect x="2438.4" y="93.8" width="1.2" height="1"/><rect x="2442.1" y="93.8" width="1.2" height="1"/><rect x="2445.8" y="93.8" width="1.2" height="1"/><rect x="2449.5" y="93.8" width="1.2" height="1"/><rect x="2453.2" y="93.8" width="1.2" height="1"/></g><rect x="2441.5" y="82" width="9.5" height="6.5" fill="#7d6350"/><rect x="2436.5" y="61.5" width="19.5" height="20" rx="5" fill="#85684f"/><ellipse cx="2435.3" cy="70.8" rx="1.8" ry="2.3" fill="#85684f"/><ellipse cx="2457.3" cy="70.8" rx="1.8" ry="2.3" fill="#85684f"/><path d="M2435.6,68.5 Q2434.5,58 2440.5,55.3 Q2448,53.5 2456.7,54 Q2457.6,60 2456.8,68 L2455.5,68 Q2455,62.5 2452,62.3 Q2449,63.5 2446,62.5 Q2442,61.8 2438.5,63.5 Q2437.2,65 2437,68.5 Z" fill="#333"/><circle cx="2441.2" cy="69.3" r="1.1" fill="#3a3a3a"/><circle cx="2451.2" cy="69.3" r="1.1" fill="#3a3a3a"/><path d="M2437.8,77.8 Q2446,75 2454.2,77.8 Q2453.5,83.6 2446,83.6 Q2438.5,83.6 2437.8,77.8 Z" fill="#3a3a3a"/><rect x="2441" y="75.9" width="10.5" height="1.4" fill="#c8c8c8"/><rect x="2441.8" y="77.3" width="9" height="1.8" fill="#6a1a2a"/><g fill="#e0203a"><rect x="2443.5" y="77.9" width="1" height="0.9"/><rect x="2445.8" y="77.9" width="1.4" height="0.9"/><rect x="2448.2" y="77.9" width="1" height="0.9"/></g><g fill="#6a6a6a"><circle cx="2844" cy="67" r="2.8"/><circle cx="2844" cy="76" r="2.8"/><circle cx="2844" cy="85" r="2.8"/></g><g stroke="#0a3386" stroke-width="2.3" fill="none" stroke-linecap="round" stroke-linejoin="round"><line x1="281" y1="161" x2="315.5" y2="161"/><path d="M290.3,161 L290.3,186 Q290.3,190.7 295,190.7 L304.5,190.7"/><line x1="290.3" y1="175.7" x2="304.5" y2="175.7"/><circle cx="308" cy="175.7" r="3.4"/><circle cx="308" cy="190.7" r="3.4"/></g><g stroke="#6c6c6c" stroke-width="2.3" fill="none" stroke-linecap="round" stroke-linejoin="round"><rect x="503.5" y="158.8" width="37" height="37" rx="4"/><line x1="503.5" y1="168" x2="540.5" y2="168"/><g fill="#6c6c6c" stroke="none"><circle cx="525.5" cy="163.6" r="1.1"/><circle cx="530.5" cy="163.6" r="1.1"/><circle cx="535.5" cy="163.6" r="1.1"/></g><polyline points="514,177 507,183 514,189"/><line x1="522" y1="173" x2="518" y2="191"/><polyline points="530,177 537,183 530,189"/><polygon points="906.3,161 921.2,169.4 921.2,186.7 906.3,195.2 891.3,186.7 891.3,169.4"/><polyline points="897.8,171.8 906.3,176.8 914.3,171.8"/><line x1="906.3" y1="176.8" x2="906.3" y2="186.5"/><line x1="1087.5" y1="158" x2="1108.2" y2="158"/><path d="M1093.3,158.5 L1093.3,169 A15,15 0 1 0 1103,169 L1103,158.5"/><path d="M1083.3,184 Q1090,187 1097,182 Q1104,177 1112,179.5"/><path d="M1538.3,164.2 L1553.3,164.2 L1564.6,176.3 L1546,192 L1527.3,176.3 Z"/><polyline points="1539.3,173.5 1546,179.3 1552.6,173.5"/></g><g stroke="#6c6c6c" stroke-width="2.6" fill="none" stroke-linecap="round"><path d="M1274.5,172 L1274.5,164.5 Q1274.5,162.5 1276.5,162.5 L1282,162.5 M1297.5,162.5 L1303.5,162.5 Q1305.5,162.5 1305.5,164.5 L1305.5,172 M1274.5,183 L1274.5,190.5 Q1274.5,192.5 1276.5,192.5 L1282,192.5 M1297.5,192.5 L1303.5,192.5 Q1305.5,192.5 1305.5,190.5 L1305.5,183"/><line x1="1273" y1="177.5" x2="1307" y2="177.5"/></g><g stroke="#6c6c6c" stroke-width="1.9" fill="none"><polyline points="699.7,168.7 714.1,160.6 728.7,168.7 728.7,185.9 714.1,194 699.7,185.9 699.7,168.7"/><line x1="699.7" y1="168.7" x2="708.8" y2="174.2"/><line x1="728.7" y1="168.7" x2="719.4" y2="174.2"/><line x1="714.1" y1="183" x2="714.1" y2="194"/></g><g fill="#6c6c6c"><circle cx="714.1" cy="160.6" r="3"/><circle cx="728.7" cy="168.7" r="3"/><circle cx="728.7" cy="185.9" r="3"/><circle cx="714.1" cy="194" r="3"/><circle cx="699.7" cy="185.9" r="3"/><circle cx="699.7" cy="168.7" r="3"/><circle cx="714.1" cy="177.3" r="4"/></g><g stroke="#161616" stroke-width="2.2" fill="none" stroke-linejoin="round"><path d="M644,317 L635,317 L635,337 L655,337 L655,328"/><path d="M642,330.5 L642.5,326 L650.5,318 Q652,316.8 653.5,318 L654.3,318.8 Q655.5,320.2 654.3,321.5 L646.3,329.7 Z"/></g><g stroke="#6c6c6c" stroke-width="2.2" fill="none" stroke-linejoin="round"><path d="M1061,317 L1052,317 L1052,337 L1072,337 L1072,328"/><path d="M1059,330.5 L1059.5,326 L1067.5,318 Q1069,316.8 1070.5,318 L1071.3,318.8 Q1072.5,320.2 1071.3,321.5 L1063.3,329.7 Z"/></g><g stroke="#161616" stroke-width="2.2" fill="none" stroke-linejoin="round"><path d="M1479,317 L1470,317 L1470,337 L1490,337 L1490,328"/><path d="M1477,330.5 L1477.5,326 L1485.5,318 Q1487,316.8 1488.5,318 L1489.3,318.8 Q1490.5,320.2 1489.3,321.5 L1481.3,329.7 Z"/></g><line x1="331.8" y1="513.8" x2="432" y2="513.8" stroke="#0a3386" stroke-width="3"/><circle cx="331.8" cy="513.8" r="4.8" fill="#808080" stroke="#0a3386" stroke-width="2"/><circle cx="432" cy="513.8" r="4.8" fill="#808080" stroke="#0a3386" stroke-width="2"/><g stroke="#0a3386" stroke-width="3"><line x1="373.9" y1="497" x2="389.9" y2="497"/><line x1="381.9" y1="489" x2="381.9" y2="505"/></g><line x1="728.0" y1="513.8" x2="828.0" y2="513.8" stroke="#0a3386" stroke-width="3"/><circle cx="728.0" cy="513.8" r="4.8" fill="#808080" stroke="#0a3386" stroke-width="2"/><circle cx="828.0" cy="513.8" r="4.8" fill="#808080" stroke="#0a3386" stroke-width="2"/><g stroke="#0a3386" stroke-width="3"><line x1="770.0" y1="497" x2="786.0" y2="497"/><line x1="778.0" y1="489" x2="778.0" y2="505"/></g><line x1="1124.0" y1="513.8" x2="1224.0" y2="513.8" stroke="#0a3386" stroke-width="3"/><circle cx="1124.0" cy="513.8" r="4.8" fill="#808080" stroke="#0a3386" stroke-width="2"/><circle cx="1224.0" cy="513.8" r="4.8" fill="#808080" stroke="#0a3386" stroke-width="2"/><g stroke="#0a3386" stroke-width="3"><line x1="1166.0" y1="497" x2="1182.0" y2="497"/><line x1="1174.0" y1="489" x2="1174.0" y2="505"/></g><line x1="1520.0" y1="513.8" x2="1620.0" y2="513.8" stroke="#0a3386" stroke-width="3"/><circle cx="1520.0" cy="513.8" r="4.8" fill="#808080" stroke="#0a3386" stroke-width="2"/><circle cx="1620.0" cy="513.8" r="4.8" fill="#808080" stroke="#0a3386" stroke-width="2"/><g stroke="#0a3386" stroke-width="3"><line x1="1562.0" y1="497" x2="1578.0" y2="497"/><line x1="1570.0" y1="489" x2="1570.0" y2="505"/></g><line x1="1916.0" y1="513.8" x2="2016.0" y2="513.8" stroke="#0a3386" stroke-width="3"/><circle cx="1916.0" cy="513.8" r="4.8" fill="#808080" stroke="#0a3386" stroke-width="2"/><circle cx="2016.0" cy="513.8" r="4.8" fill="#808080" stroke="#0a3386" stroke-width="2"/><g stroke="#0a3386" stroke-width="3"><line x1="1958.0" y1="497" x2="1974.0" y2="497"/><line x1="1966.0" y1="489" x2="1966.0" y2="505"/></g><path d="M701.04,501.65 L704.85,501.61 L704.85,507.79 L701.04,507.75 L700.64,508.83 L700.12,509.85 L699.49,510.81 L698.76,511.69 L700.70,514.98 L695.35,518.07 L693.47,514.75 L692.34,514.94 L691.20,515.00 L690.06,514.94 L688.93,514.75 L687.05,518.07 L681.70,514.98 L683.64,511.69 L682.91,510.81 L682.28,509.85 L681.76,508.83 L681.36,507.75 L677.55,507.79 L677.55,501.61 L681.36,501.65 L681.76,500.57 L682.28,499.55 L682.91,498.59 L683.64,497.71 L681.70,494.42 L687.05,491.33 L688.93,494.65 L690.06,494.46 L691.20,494.40 L692.34,494.46 L693.47,494.65 L695.35,491.33 L700.70,494.42 L698.76,497.71 L699.49,498.59 L700.12,499.55 L700.64,500.57 Z" fill="#323335"/><circle cx="691.2" cy="504.7" r="6" fill="#808080"/><path d="M1097.04,501.65 L1100.85,501.61 L1100.85,507.79 L1097.04,507.75 L1096.64,508.83 L1096.12,509.85 L1095.49,510.81 L1094.76,511.69 L1096.70,514.98 L1091.35,518.07 L1089.47,514.75 L1088.34,514.94 L1087.20,515.00 L1086.06,514.94 L1084.93,514.75 L1083.05,518.07 L1077.70,514.98 L1079.64,511.69 L1078.91,510.81 L1078.28,509.85 L1077.76,508.83 L1077.36,507.75 L1073.55,507.79 L1073.55,501.61 L1077.36,501.65 L1077.76,500.57 L1078.28,499.55 L1078.91,498.59 L1079.64,497.71 L1077.70,494.42 L1083.05,491.33 L1084.93,494.65 L1086.06,494.46 L1087.20,494.40 L1088.34,494.46 L1089.47,494.65 L1091.35,491.33 L1096.70,494.42 L1094.76,497.71 L1095.49,498.59 L1096.12,499.55 L1096.64,500.57 Z" fill="#323335"/><circle cx="1087.2" cy="504.7" r="6" fill="#808080"/><path d="M1493.04,501.65 L1496.85,501.61 L1496.85,507.79 L1493.04,507.75 L1492.64,508.83 L1492.12,509.85 L1491.49,510.81 L1490.76,511.69 L1492.70,514.98 L1487.35,518.07 L1485.47,514.75 L1484.34,514.94 L1483.20,515.00 L1482.06,514.94 L1480.93,514.75 L1479.05,518.07 L1473.70,514.98 L1475.64,511.69 L1474.91,510.81 L1474.28,509.85 L1473.76,508.83 L1473.36,507.75 L1469.55,507.79 L1469.55,501.61 L1473.36,501.65 L1473.76,500.57 L1474.28,499.55 L1474.91,498.59 L1475.64,497.71 L1473.70,494.42 L1479.05,491.33 L1480.93,494.65 L1482.06,494.46 L1483.20,494.40 L1484.34,494.46 L1485.47,494.65 L1487.35,491.33 L1492.70,494.42 L1490.76,497.71 L1491.49,498.59 L1492.12,499.55 L1492.64,500.57 Z" fill="#323335"/><circle cx="1483.2" cy="504.7" r="6" fill="#808080"/><path d="M1889.04,501.65 L1892.85,501.61 L1892.85,507.79 L1889.04,507.75 L1888.64,508.83 L1888.12,509.85 L1887.49,510.81 L1886.76,511.69 L1888.70,514.98 L1883.35,518.07 L1881.47,514.75 L1880.34,514.94 L1879.20,515.00 L1878.06,514.94 L1876.93,514.75 L1875.05,518.07 L1869.70,514.98 L1871.64,511.69 L1870.91,510.81 L1870.28,509.85 L1869.76,508.83 L1869.36,507.75 L1865.55,507.79 L1865.55,501.61 L1869.36,501.65 L1869.76,500.57 L1870.28,499.55 L1870.91,498.59 L1871.64,497.71 L1869.70,494.42 L1875.05,491.33 L1876.93,494.65 L1878.06,494.46 L1879.20,494.40 L1880.34,494.46 L1881.47,494.65 L1883.35,491.33 L1888.70,494.42 L1886.76,497.71 L1887.49,498.59 L1888.12,499.55 L1888.64,500.57 Z" fill="#323335"/><circle cx="1879.2" cy="504.7" r="6" fill="#808080"/></svg>
<svg width="2960" height="1520" viewBox="0 0 2960 1520"><g stroke="#666" stroke-width="2.4" stroke-linecap="round"><line x1="2836.5" y1="292.5" x2="2860" y2="316"/><line x1="2860" y1="292.5" x2="2836.5" y2="316"/></g><polygon points="2508.8,518.7 2542,505 2542,515.2 2573,514.8 2573,522.2 2542,522.5 2542,532.5" fill="#db2218"/><polygon points="2193,642 2227,628.3 2227,638.5 2257.5,638 2257.5,645.5 2227,646 2227,655.8" fill="#db2218"/></svg>
</body></html>
